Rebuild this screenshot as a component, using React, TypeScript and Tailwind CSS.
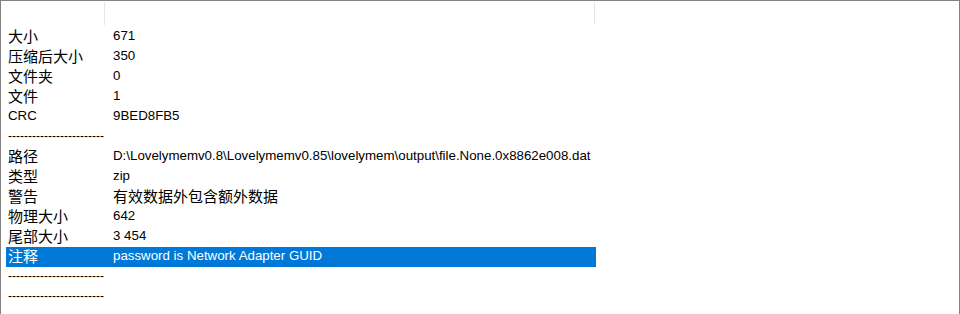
import React from "react";

const latin = "font-['Liberation_Sans','Noto_Sans_CJK_SC',sans-serif] text-[13.3px] relative -top-px";
const dashes = "font-['Liberation_Sans',sans-serif] text-[12px] relative -top-px";
const cjk = "font-['Noto_Sans_CJK_SC',sans-serif] text-[15px] relative -top-[2px]";

const hasCjk = (s: string) => /[\u4e00-\u9fff]/.test(s);

const SEP = "------------------------";

const rows: { label: string; value?: string; selected?: boolean }[] = [
  { label: "大小", value: "671" },
  { label: "压缩后大小", value: "350" },
  { label: "文件夹", value: "0" },
  { label: "文件", value: "1" },
  { label: "CRC", value: "9BED8FB5" },
  { label: SEP },
  { label: "路径", value: "D:\\Lovelymemv0.8\\Lovelymemv0.85\\lovelymem\\output\\file.None.0x8862e008.dat" },
  { label: "类型", value: "zip" },
  { label: "警告", value: "有效数据外包含额外数据" },
  { label: "物理大小", value: "642" },
  { label: "尾部大小", value: "3 454" },
  { label: "注释", value: "password is Network Adapter GUID", selected: true },
  { label: SEP },
  { label: SEP },
];

const Cell: React.FC<{ text: string }> = ({ text }) => (
  <span
    className={`whitespace-nowrap leading-none ${
      text === SEP ? dashes : hasCjk(text) ? cjk : latin
    }`}
  >
    {text}
  </span>
);

export default function App() {
  return (
    <div className="w-[960px] h-[314px] bg-white border-t border-l border-r border-[#838383] overflow-hidden text-black">
      {/* header */}
      <div className="flex h-[25px]">
        <div className="w-[104px] flex justify-end items-stretch py-[1px]">
          <div className="w-px bg-[#e5e5e5]" />
        </div>
        <div className="w-[490px] flex justify-end items-stretch py-[1px]">
          <div className="w-px bg-[#e5e5e5]" />
        </div>
      </div>

      {/* list */}
      <div className="flex flex-col pl-[5px] pt-[1px]">
        {rows.map((r, i) => (
          <div
            key={i}
            className={`flex items-center h-[20px] w-[590px] ${r.selected ? "bg-[#0078d7] text-white" : ""}`}
          >
            <div className="w-[107px] shrink-0 pl-[2px] flex items-center">
              <Cell text={r.label} />
            </div>
            {r.value && (
              <div className="flex-1 flex items-center">
                <Cell text={r.value} />
              </div>
            )}
          </div>
        ))}
      </div>
    </div>
  );
}
